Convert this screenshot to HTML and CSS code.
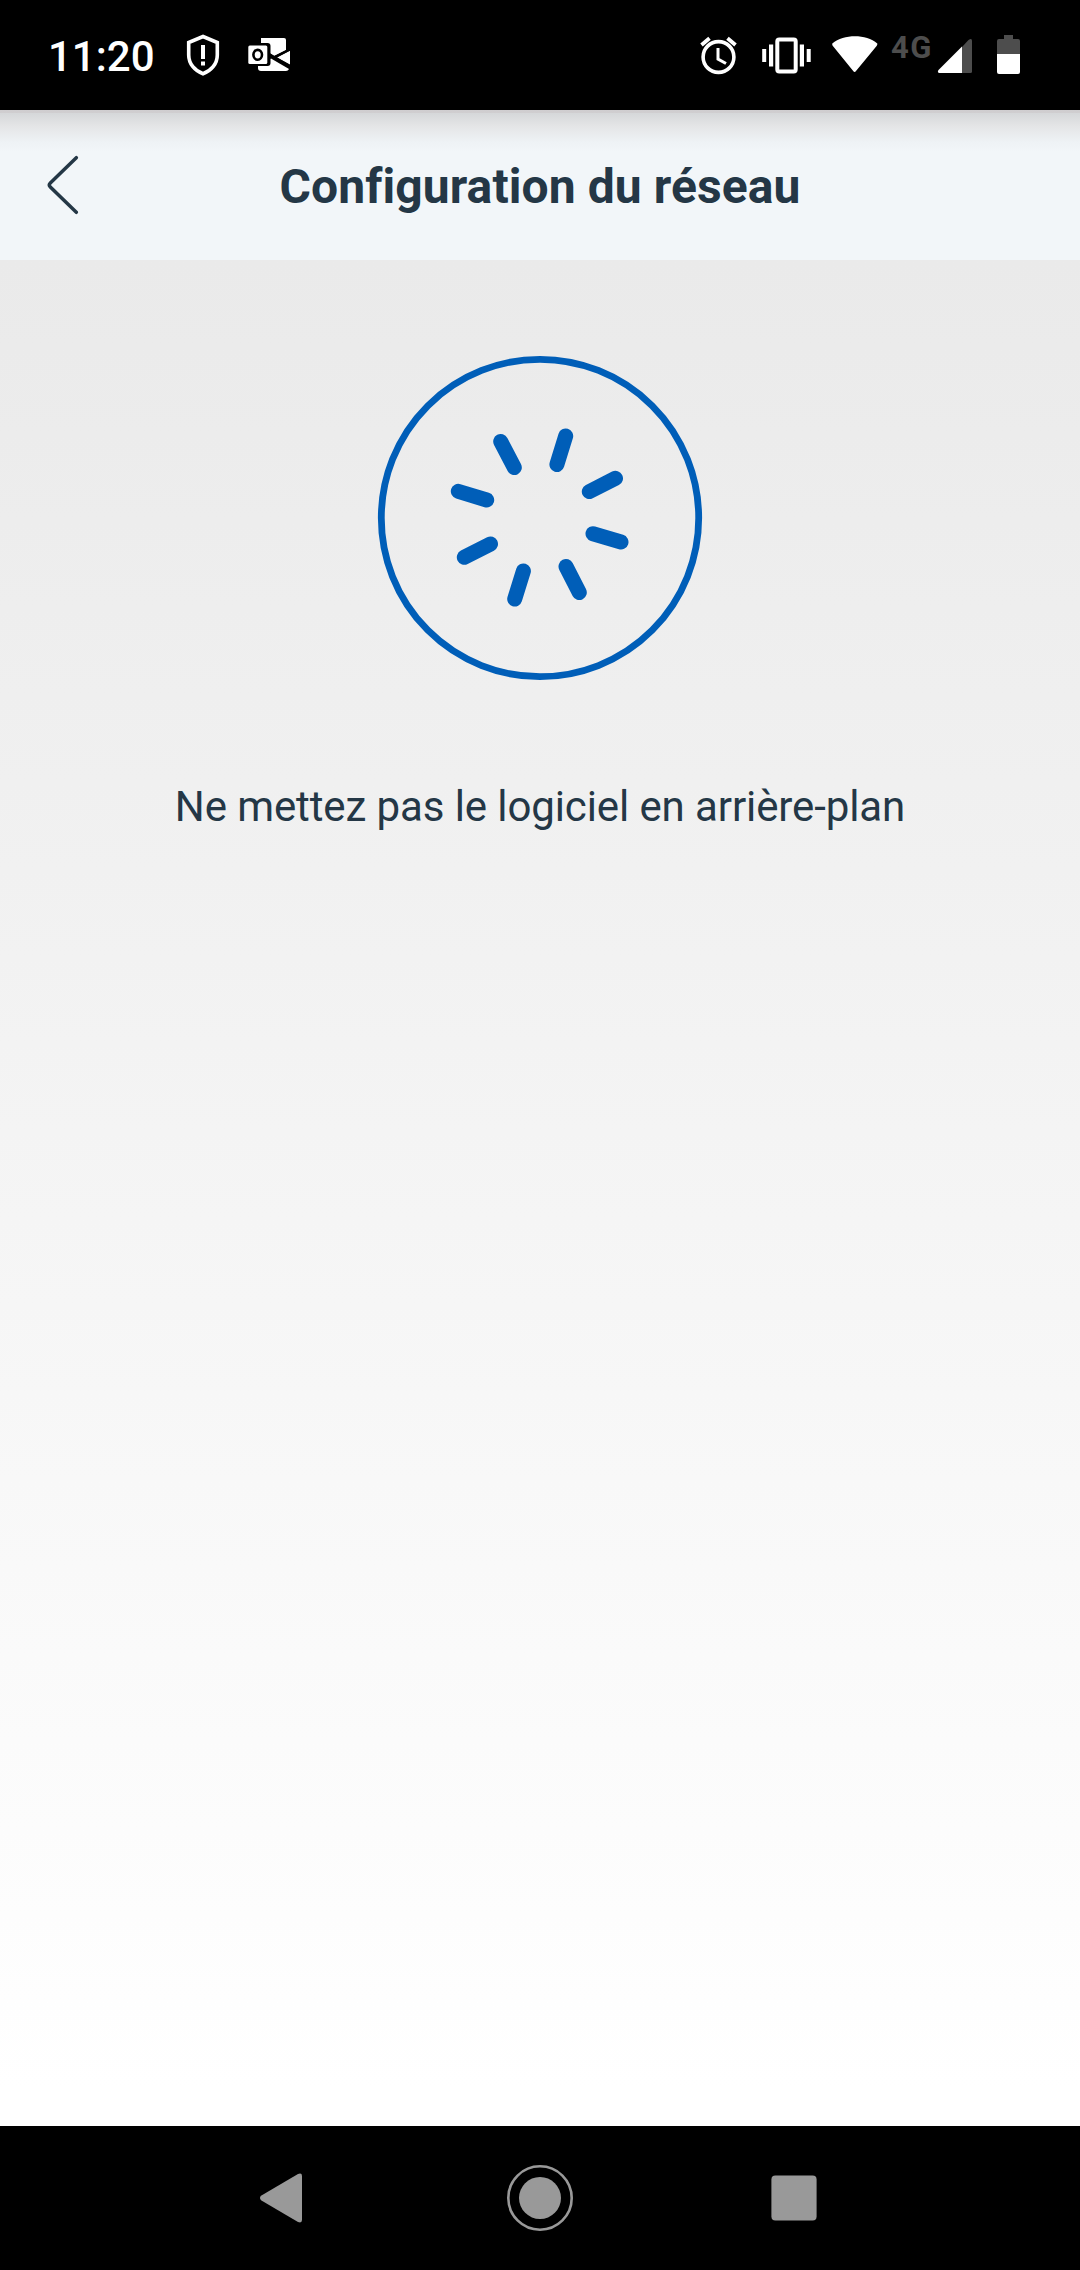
FILE: index.html
```html
<!DOCTYPE html>
<html lang="fr">
<head>
<meta charset="utf-8">
<title>Configuration du réseau</title>
<link rel="stylesheet" href="styles.css">
</head>
<body>
<div class="status-bar">
  <div class="status-left">
    <span class="clock">11:20</span>
    <svg class="shield" width="34" height="44" viewBox="186 33 34 44"><path d="M203 36.500 217.300 42.500V55C217.300 64 211 71 203 73.800 195 71 188.700 64 188.700 55V42.500Z" fill="none" stroke="#fff" stroke-width="3.600"/><path d="M201 45h4v14h-4zM201 61.500h4v4h-4z" fill="#fff"/></svg>
    <svg class="outlook" width="44" height="36" viewBox="247 37 44 36"><path d="M261 38h23q2 0 2 2v10l-12 6-13-8z" fill="#fff"/><path d="M258 66l13-7.500 18 10.500q-1 2-3 2h-25q-3 0-3-3z" fill="#fff"/><path d="M290 50.500v14l-13-7z" fill="#fff"/><path d="M269 54l21 12.500M273 58l17-8.500" stroke="#000" stroke-width="2.400"/><rect x="247" y="43" width="23.500" height="23" rx="3" fill="#000"/><rect x="248.300" y="45.500" width="19" height="18.500" rx="1.500" fill="#fff"/><ellipse cx="257.700" cy="54.800" rx="4.300" ry="4.900" fill="none" stroke="#000" stroke-width="2.600"/></svg>
  </div>
  <div class="status-right">
    <svg class="alarm" width="38" height="40" viewBox="700 36 38 40"><circle cx="718.500" cy="57" r="15.400" fill="none" stroke="#fff" stroke-width="3.600"/><path d="M718 48v11l8 4.500" fill="none" stroke="#fff" stroke-width="3"/><path d="M701.500 45l8-6.800M735.500 45l-8-6.800" stroke="#fff" stroke-width="3.800"/></svg>
    <svg class="vibrate" width="50" height="38" viewBox="761 36 50 38"><rect x="777.300" y="39.500" width="18.400" height="32" rx="2" fill="none" stroke="#fff" stroke-width="4"/><path d="M762.200 49h4v13h-4zM769 44.500h4.200v22H769zM799.800 44.500h4.200v22h-4.200zM806.700 49h4v13h-4z" fill="#fff"/></svg>
    <svg class="wifi" width="46" height="38" viewBox="832 35 46 38"><path d="M832.300 43.500C844 33.900 866 33.900 877.300 43.500Q877.500 44.800 876.600 45.900L856 71Q854.600 72.800 853.200 71L832.900 45.900Q832 44.800 832.300 43.500Z" fill="#fff"/></svg>
    <span class="network">4G</span>
    <svg class="signal" width="36" height="36" viewBox="937 38 36 36"><path d="M962 47 968.500 40Q972 37.500 972 41V71.500Q972 73 970.500 73H962Z" fill="#4d4d4d"/><path d="M962 46.500V73H939Q937 72 938.500 70Z" fill="#fff"/></svg>
    <svg class="battery" width="24" height="40" viewBox="997 35 24 40"><path d="M1004 35h9v4h5q2 0 2 2v13h-23V41q0-2 2-2h5z" fill="#4d4d4d"/><path d="M997 54h23v18q0 2-2 2h-19q-2 0-2-2z" fill="#fff"/></svg>
  </div>
</div>
<header class="header">
  <svg class="back" width="34" height="62" viewBox="46 154 34 62"><path d="M76.300 157.700 50.300 183Q48.300 185 50.300 187L76.300 212.300" fill="none" stroke="#243746" stroke-width="3.500" stroke-linecap="round"/></svg>
  <h1 class="title">Configuration du réseau</h1>
</header>
<main class="content">
  <svg class="spinner" width="326" height="326" viewBox="-163 -163 326 326" fill="none" stroke="#005eb8">
    <circle r="158.700" stroke-width="6.800"/>
    <path stroke-width="15" stroke-linecap="round" d="M16.900-53.500 25.700-82M49.300-26.400 75.500-39.700M53 15.700 81 24M26 48.500 39.300 74.500M-16.600 53-25.300 81M-49.500 26-75.700 39.300M-53.300-18-81.700-26.700M-25.700-50.500-39.300-76.500"/>
  </svg>
  <p class="message">Ne mettez pas le logiciel en arrière-plan</p>
</main>
<nav class="nav-bar">
  <svg width="44" height="50" viewBox="259 2173 44 50"><path d="M261 2195.800 298 2174Q302 2172.500 302 2176V2220Q302 2223.500 298 2222L261 2200.200Q259 2198 261 2195.800Z" fill="#999"/></svg>
  <svg width="68" height="68" viewBox="-34 -34 68 68"><circle r="31.700" fill="none" stroke="#999" stroke-width="2.600"/><circle r="21" fill="#999"/></svg>
  <svg width="46" height="46" viewBox="0 0 46 46"><rect x=".4" y=".4" width="45.200" height="45.200" rx="4" fill="#999"/></svg>
</nav>
</body>
</html>
```
FILE: styles.css
```css
* { box-sizing: border-box; }

body {
  margin: 0;
  width: 1080px;
  height: 2270px;
  display: flex;
  flex-direction: column;
  overflow: hidden;
  font-family: Roboto, sans-serif;
  color: #243746;
}

svg { display: block; flex: none; }

.status-bar {
  flex: 0 0 110px;
  display: flex;
  justify-content: space-between;
  align-items: flex-start;
  padding: 33px 59px 0 48px;
  background: #000;
  color: #fff;
}

.status-left,
.status-right { display: flex; align-items: flex-start; }

.clock {
  width: 138px;
  margin-top: 1px;
  font-size: 42px;
  font-weight: 500;
  line-height: 46px;
}

.outlook { margin: 4px 0 0 27px; }
.alarm { margin-top: 3px; }
.vibrate { margin: 3px 0 0 23px; }
.wifi { margin: 2px 0 0 21px; }

.network {
  width: 46px;
  margin: -3px 0 0 13px;
  color: #4d4d4d;
  font-size: 31px;
  font-weight: 700;
  line-height: 36px;
  letter-spacing: 1.5px;
}

.signal { margin-top: 5px; }
.battery { margin: 2px 0 0 24px; }

.header {
  flex: 0 0 150px;
  display: grid;
  grid-template-columns: 80px 1fr 80px;
  align-items: center;
  background: linear-gradient(#cfcdcf 0, #d0ced0 3px, #d5d7d9 3px, #e4e5e6 16px, #e8eaec 22px, #eef2f5 32px, #f2f6f9 42px);
}

.back { margin-left: 46px; }

.title {
  margin: 4px 0 0;
  text-align: center;
  font-size: 48px;
  font-weight: 700;
  line-height: 56px;
  letter-spacing: 0.08px;
}

.content {
  flex: 1;
  display: flex;
  flex-direction: column;
  align-items: center;
  padding-top: 95px;
  background: linear-gradient(#eaeaea, #fff 98%);
}

.message {
  margin: 101px 0 0;
  font-size: 42px;
  line-height: 50px;
  letter-spacing: -0.1px;
  white-space: nowrap;
}

.nav-bar {
  flex: 0 0 144px;
  display: grid;
  grid-template-columns: 1fr 68px 1fr;
  align-items: center;
  padding: 0 263px 0 259px;
  background: #000;
}

.nav-bar {
  padding: 0 263px;
}

.nav-bar svg:first-child { margin-left: -4px; }
.nav-bar svg:last-child { justify-self: end; }
```
